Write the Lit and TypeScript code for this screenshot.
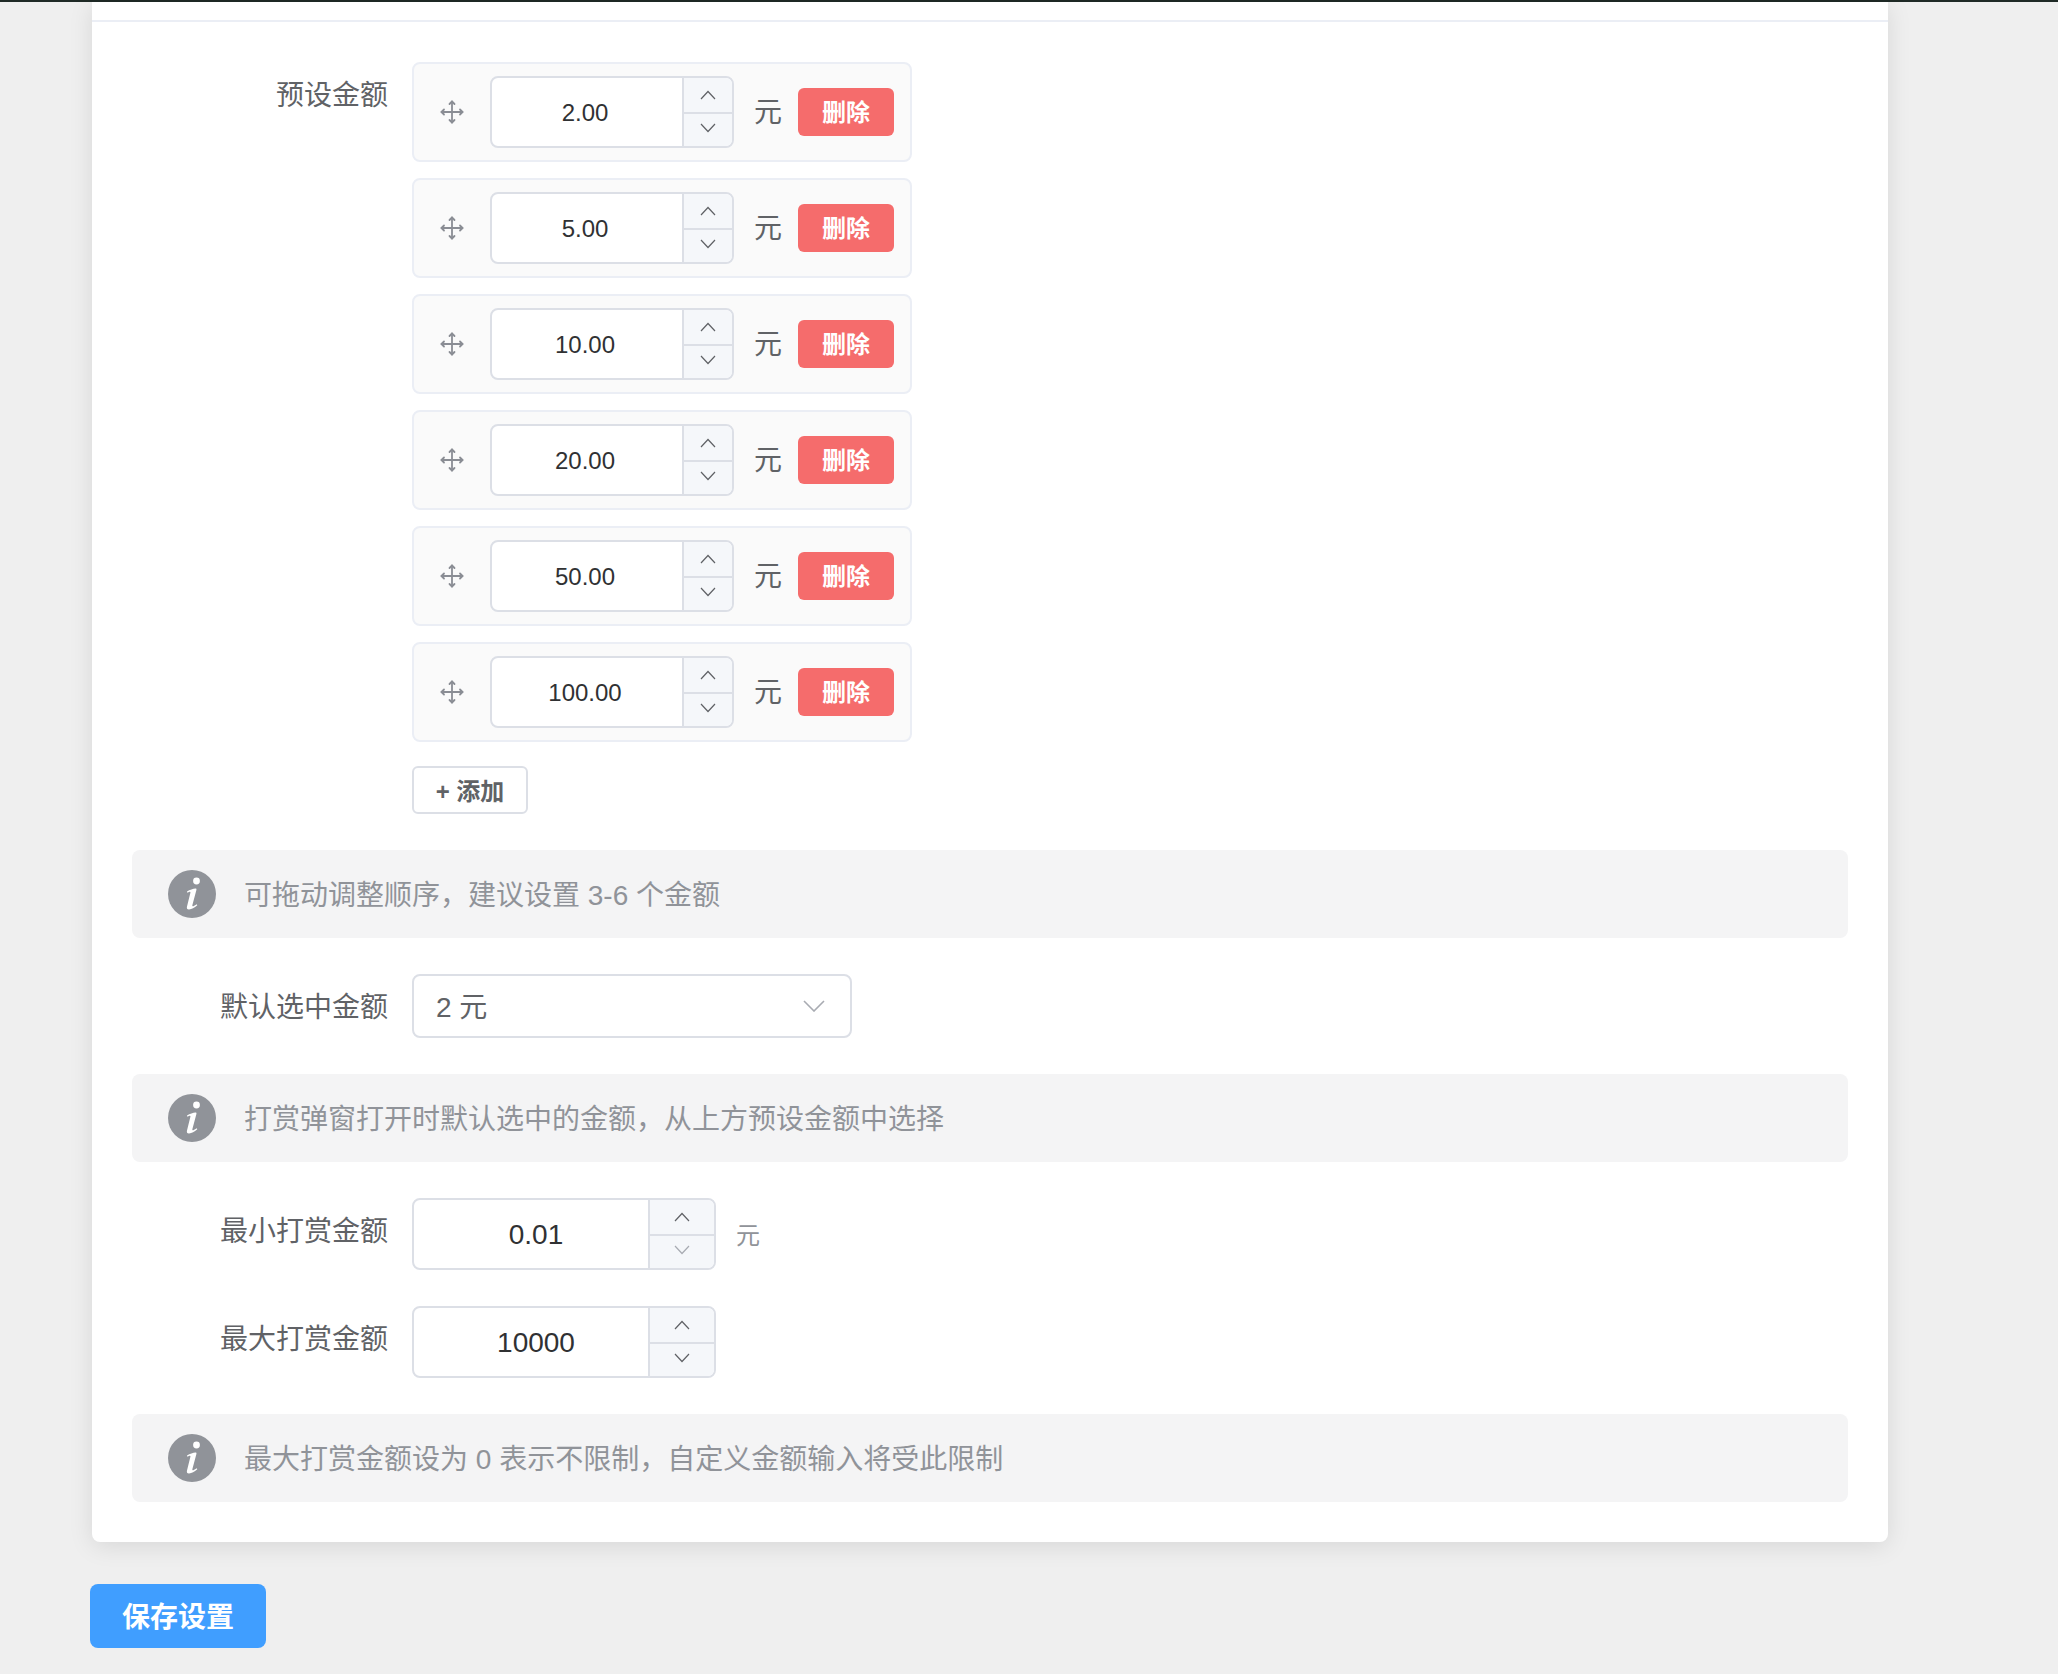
import { LitElement, html, css, svg } from "lit";
import { customElement } from "lit/decorators.js";

const PRESETS = ["2.00", "5.00", "10.00", "20.00", "50.00", "100.00"];

const chevronUp = (faded = false) => html`
  <svg class="chev ${faded ? "faded" : ""}" viewBox="0 0 16 10"><path d="M1 9 8 1.5 15 9" /></svg>
`;
const chevronDown = (faded = false) => html`
  <svg class="chev ${faded ? "faded" : ""}" viewBox="0 0 16 10"><path d="M1 1 8 8.5 15 1" /></svg>
`;

const moveIcon = svg`
  <g fill="none" stroke="#8a8d94" stroke-width="1.8" stroke-linecap="round" stroke-linejoin="round">
    <path d="M12 1.5v21M1.5 12h21" />
    <path d="M9.5 4l2.5-2.5 2.5 2.5M9.5 20l2.5 2.5 2.5-2.5M4 9.5l-2.5 2.5 2.5 2.5M20 9.5l2.5 2.5-2.5 2.5" />
  </g>
`;

const infoIcon = svg`
  <circle cx="24" cy="24" r="24" fill="#909399" />
  <circle cx="28.5" cy="11" r="3.4" fill="#fff" />
  <path
    d="M19 21.5c3-1.8 6-2.8 8.6-3 .8 0 1 .6.8 1.5l-4 15c-.3 1.3.4 1.6 1.4 1.1l3-1.9.5 1c-3 2.6-5.6 4-8.2 4.2-1.9.1-2.6-1-2.1-3l3.4-13.6c.2-1-.2-1.3-1-1l-2 .9z"
    fill="#fff"
  />
`;

@customElement("app-root")
export class AppRoot extends LitElement {
  static styles = css`
    :host {
      display: block;
      height: 1674px;
      overflow: hidden;
      background: #efefef;
      font-family: "Liberation Sans", "Noto Sans CJK SC", sans-serif;
      font-size: 28px;
      color: #606266;
    }

    .topbar {
      height: 2px;
      background: #1f2a26;
    }

    .page {
      padding: 0 170px 0 90px;
    }

    .card {
      margin-left: 2px;
      background: #fff;
      border-radius: 0 0 8px 8px;
      box-shadow: 0 4px 24px rgba(0, 0, 0, 0.1);
    }

    .card-head {
      height: 18px;
      border-bottom: 2px solid #ebeef5;
    }

    .card-body {
      display: flex;
      flex-direction: column;
      gap: 36px;
      padding: 40px;
    }

    .row {
      display: flex;
      align-items: flex-start;
    }

    .label {
      flex: none;
      box-sizing: border-box;
      width: 280px;
      height: 64px;
      padding-right: 24px;
      text-align: right;
      line-height: 67px;
    }

    .amounts {
      display: flex;
      flex-direction: column;
      gap: 16px;
    }

    .amount {
      display: flex;
      align-items: center;
      box-sizing: border-box;
      width: 500px;
      height: 100px;
      padding: 12px 16px;
      border: 2px solid #ebeef5;
      border-radius: 8px;
      background: #fafafa;
    }

    .drag {
      flex: none;
      width: 24px;
      height: 24px;
      margin: 0 26px 0 10px;
    }

    .unit {
      width: 28px;
      margin: 0 16px 0 20px;
      padding-top: 2px;
      line-height: 40px;
    }

    .delete {
      display: flex;
      align-items: center;
      justify-content: center;
      box-sizing: border-box;
      width: 96px;
      height: 48px;
      padding-bottom: 3px;
      border-radius: 6px;
      background: #f56c6c;
      color: #fff;
      font-size: 24px;
      font-weight: 700;
    }

    .add {
      display: flex;
      align-items: center;
      justify-content: center;
      box-sizing: border-box;
      width: 116px;
      height: 48px;
      margin-top: 24px;
      padding-bottom: 2px;
      border: 2px solid #dcdfe6;
      border-radius: 6px;
      background: #fff;
      font-size: 24px;
      font-weight: 700;
    }

    .number {
      display: flex;
      flex: none;
      box-sizing: border-box;
      height: 72px;
      border: 2px solid #dcdfe6;
      border-radius: 8px;
      overflow: hidden;
      background: #fff;
      color: #303133;
    }

    .number.small {
      width: 244px;
      font-size: 24px;
    }

    .number.large {
      width: 304px;
      font-size: 28px;
    }

    .value {
      flex: 1;
      text-align: center;
      line-height: 70px;
    }

    .small .value {
      padding-right: 4px;
    }

    .large .value {
      padding-left: 10px;
    }

    .steps {
      display: flex;
      flex-direction: column;
      flex: none;
      border-left: 2px solid #dcdfe6;
      background: #f5f7fa;
    }

    .small .steps {
      width: 48px;
    }

    .large .steps {
      width: 64px;
    }

    .step {
      display: flex;
      align-items: center;
      justify-content: center;
      box-sizing: border-box;
      flex: 1;
      padding-bottom: 5px;
    }

    .step.up {
      flex: none;
      height: 36px;
      padding-bottom: 0;
      border-bottom: 2px solid #dcdfe6;
    }

    .chev {
      width: 16px;
      height: 10px;
      fill: none;
      stroke: #606266;
      stroke-width: 1.2;
    }

    .chev.faded {
      stroke: #a8abb2;
    }

    .select {
      display: flex;
      align-items: center;
      justify-content: space-between;
      box-sizing: border-box;
      width: 440px;
      height: 64px;
      padding: 0 25px 0 22px;
      border: 2px solid #dcdfe6;
      border-radius: 8px;
      background: #fff;
    }

    .select span {
      padding-bottom: 3px;
    }

    .select svg {
      width: 22px;
      height: 12px;
      fill: none;
      stroke: #a8abb2;
      stroke-width: 1.6;
    }

    .hint-unit {
      height: 72px;
      margin-left: 20px;
      font-size: 24px;
      line-height: 75px;
      color: #909399;
    }

    .info {
      display: flex;
      align-items: center;
      gap: 28px;
      height: 88px;
      padding: 0 36px;
      border-radius: 8px;
      background: #f4f4f5;
      color: #909399;
    }

    .info svg {
      flex: none;
      width: 48px;
      height: 48px;
    }

    .info span {
      padding-bottom: 2px;
    }

    .save {
      display: flex;
      align-items: center;
      justify-content: center;
      box-sizing: border-box;
      width: 176px;
      height: 64px;
      margin-top: 42px;
      padding-bottom: 2px;
      border-radius: 8px;
      background: #409eff;
      color: #fff;
      font-weight: 700;
    }
  `;

  private renderNumber(value: string, size: string, fadedDown = false) {
    return html`
      <div class="number ${size}">
        <div class="value">${value}</div>
        <div class="steps">
          <div class="step up">${chevronUp()}</div>
          <div class="step">${chevronDown(fadedDown)}</div>
        </div>
      </div>
    `;
  }

  private renderInfo(text: string) {
    return html`
      <div class="info">
        <svg viewBox="0 0 48 48">${infoIcon}</svg>
        <span>${text}</span>
      </div>
    `;
  }

  render() {
    return html`
      <div class="topbar"></div>
      <div class="page">
        <div class="card">
          <div class="card-head"></div>
          <div class="card-body">
            <div class="row">
              <div class="label">预设金额</div>
              <div>
                <div class="amounts">
                  ${PRESETS.map(
                    (value) => html`
                      <div class="amount">
                        <svg class="drag" viewBox="0 0 24 24">${moveIcon}</svg>
                        ${this.renderNumber(value, "small")}
                        <span class="unit">元</span>
                        <div class="delete">删除</div>
                      </div>
                    `,
                  )}
                </div>
                <div class="add">+ 添加</div>
              </div>
            </div>
            ${this.renderInfo("可拖动调整顺序，建议设置 3-6 个金额")}
            <div class="row">
              <div class="label">默认选中金额</div>
              <div class="select">
                <span>2 元</span>
                <svg viewBox="0 0 22 12"><path d="M1 1 11 11 21 1" /></svg>
              </div>
            </div>
            ${this.renderInfo("打赏弹窗打开时默认选中的金额，从上方预设金额中选择")}
            <div class="row">
              <div class="label">最小打赏金额</div>
              ${this.renderNumber("0.01", "large", true)}
              <span class="hint-unit">元</span>
            </div>
            <div class="row">
              <div class="label">最大打赏金额</div>
              ${this.renderNumber("10000", "large")}
            </div>
            ${this.renderInfo("最大打赏金额设为 0 表示不限制，自定义金额输入将受此限制")}
          </div>
        </div>
        <div class="save">保存设置</div>
      </div>
    `;
  }
}
